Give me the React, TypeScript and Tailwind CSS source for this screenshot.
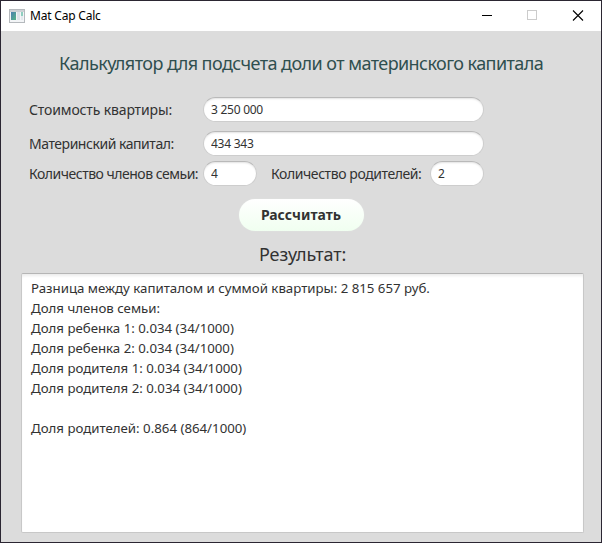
const field =
  'h-[25px] rounded-full border border-[#cdcdcd] border-t-[#b9b9b9] bg-white pl-[7px] text-[12px] leading-[23px] tracking-[-0.26px] text-[#323232] shadow-[inset_0_2px_2px_-1px_#e2e2e2] outline-none';

const lines = [
  'Разница между капиталом и суммой квартиры: 2 815 657 руб.',
  'Доля членов семьи:',
  'Доля ребенка 1: 0.034 (34/1000)',
  'Доля ребенка 2: 0.034 (34/1000)',
  'Доля родителя 1: 0.034 (34/1000)',
  'Доля родителя 2: 0.034 (34/1000)',
  '',
  'Доля родителей: 0.864 (864/1000)',
];

function TitleBar() {
  return (
    <header className="flex h-[30px] shrink-0 items-center bg-white">
      <svg className="ml-2 mr-[5px] shrink-0" width="16" height="14" viewBox="0 0 16 14" shapeRendering="crispEdges">
        <defs>
          <linearGradient id="pane" x1="0" y1="0" x2="1" y2="1">
            <stop offset="0" stopColor="#4a7fb0" />
            <stop offset="1" stopColor="#56b586" />
          </linearGradient>
        </defs>
        <rect x="0.5" y="0.5" width="15" height="13" fill="#f3f5f7" stroke="#b5b9bd" />
        <rect x="1" y="1" width="14" height="2" fill="#cdd1d5" />
        <rect x="2" y="3" width="5" height="8" fill="url(#pane)" />
        <rect x="8" y="3" width="3" height="8" fill="#dde3e8" />
        <rect x="12" y="3" width="2" height="4" fill="#8fcfc0" />
        <rect x="12" y="7" width="2" height="4" fill="#e4e9ee" />
      </svg>
      <span className="whitespace-nowrap text-[12px] leading-4 tracking-[-0.2px] text-black">Mat Cap Calc</span>
      <svg className="ml-auto mr-[17px]" width="102" height="12" viewBox="0 0 102 12" fill="none">
        <path d="M0 5.5h10" stroke="#000" />
        <rect x="45.5" y="0.5" width="9" height="9" stroke="#ccc" />
        <path d="M91 0.5l10 10M101 0.5l-10 10" stroke="#000" strokeWidth="1.1" />
      </svg>
    </header>
  );
}

export default function App() {
  return (
    <div className="flex h-[543px] w-[602px] flex-col overflow-hidden border border-[#2b2632] bg-[#dcdcdc] font-['Noto_Sans','Open_Sans',sans-serif] text-[#323232]">
      <TitleBar />
      <h1 className="mt-5 whitespace-nowrap pl-[58px] text-[18px] leading-6 tracking-[-0.57px] text-[#2f4f4f]">
        Калькулятор для подсчета доли от материнского капитала
      </h1>
      <div className="mt-[22px] flex h-[25px] items-center pl-7 text-[14px]">
        <label className="w-[174px] whitespace-nowrap tracking-[-0.14px]">Стоимость квартиры:</label>
        <input className={`${field} w-[281px]`} defaultValue="3 250 000" />
      </div>
      <div className="mt-[9px] flex h-[25px] items-center pl-7 text-[14px]">
        <label className="w-[174px] whitespace-nowrap tracking-[-0.46px]">Материнский капитал:</label>
        <input className={`${field} w-[281px]`} defaultValue="434 343" />
      </div>
      <div className="mt-[5px] flex h-[25px] items-center pl-7 text-[14px]">
        <label className="w-[174px] whitespace-nowrap tracking-[-0.49px]">Количество членов семьи:</label>
        <input className={`${field} w-[54px]`} defaultValue="4" />
        <label className="ml-[14px] w-[159px] whitespace-nowrap tracking-[-0.42px]">Количество родителей:</label>
        <input className={`${field} w-[54px]`} defaultValue="2" />
      </div>
      <button className="mt-[13px] ml-[238px] h-8 w-[125px] shrink-0 rounded-full bg-linear-to-b from-white to-[#f0fff0] pr-[1px] text-[14px] leading-8 font-bold shadow-[0_0_1px_#e8eee8]">
        Рассчитать
      </button>
      <h2 className="mt-[11px] whitespace-nowrap pl-[258px] text-[18px] leading-6 tracking-[-0.1px]">Результат:</h2>
      <div className="mt-[7px] ml-5 h-[260px] w-[563px] rounded-[2px] border border-[#c8c8c8] border-t-[#b5b5b5] bg-white pt-1 pl-[9px] text-[13.25px] leading-5 shadow-[inset_0_3px_3px_-1px_#ececec]">
        {lines.map((line, i) => (
          <p key={i} className="h-5 whitespace-nowrap">
            {line}
          </p>
        ))}
      </div>
    </div>
  );
}
